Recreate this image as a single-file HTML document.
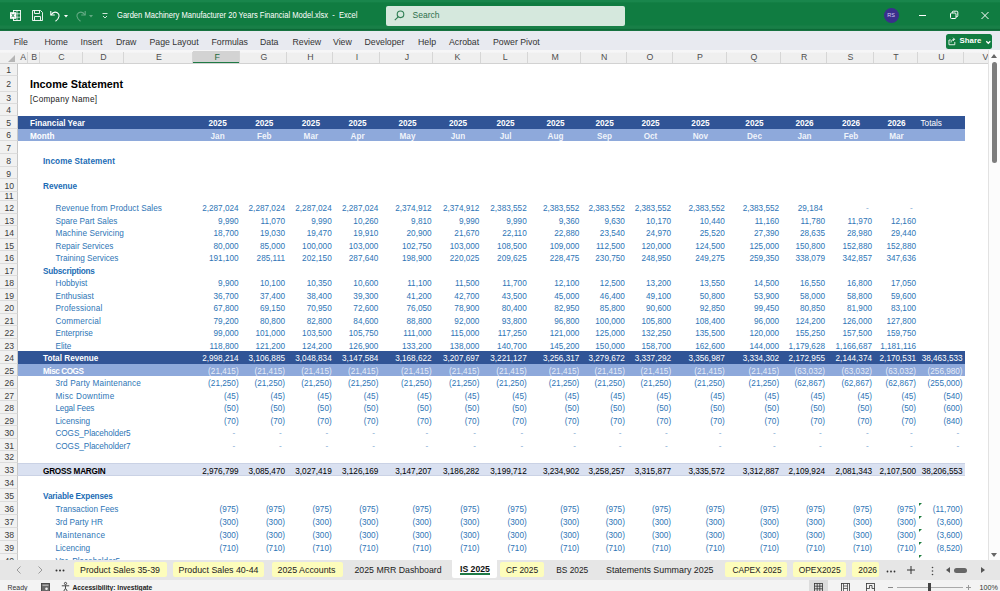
<!DOCTYPE html>
<html><head><meta charset="utf-8"><title>Income Statement - Excel</title>
<style>
*{box-sizing:border-box;margin:0;padding:0}
html,body{width:1000px;height:591px;overflow:hidden;background:#fff}
body{font-family:"Liberation Sans",sans-serif;position:relative}
.t{position:absolute;white-space:nowrap}
#titlebar{position:absolute;left:0;top:0;width:1000px;height:31px;background:linear-gradient(#19864c 0,#19864c 1.5px,#107c41 3px,#107c41 25px,#187f47 26px,#187f47 28.4px,#0c6a37 29.2px,#0c6a37 30.4px,#4a9a6d 31px)}
#menubar{position:absolute;left:0;top:31px;width:1000px;height:18.5px;background:#e8eaf0}
#menubar .t{font-size:9px;color:#333;line-height:12px;top:4.5px}
#colhdr{position:absolute;left:0;top:49.5px;width:988px;height:14.5px;overflow:hidden;background:linear-gradient(#f6f6f7 0,#f6f6f7 2px,#efefef 3.5px);border-bottom:1px solid #d2d2d2}
.ch{position:absolute;top:2.5px;height:11px;padding-left:1.5px;font-size:8.8px;line-height:11.5px;text-align:center;color:#505050;border-right:1px solid #d6d6d6}
.ch.sel{background:#d3d3d3;color:#1d6b3f;box-shadow:0 1px 0 #1f7a45, inset 0 -1px 0 #1f7a45;top:1.5px;height:12px;line-height:13px}
#rowhdr{position:absolute;left:0;top:0;width:18px;height:560px;overflow:hidden}
.rh{position:absolute;left:0;width:18px;background:#f1f1f1;font-size:9.6px;color:#3c3c3c;text-align:center;border-bottom:1px solid #dcdcdc;border-right:1px solid #c8c8c8;padding-left:1px}
.rh span{display:inline-block;transform:scaleX(.9)}
#grid{position:absolute;left:0;top:0;width:988px;height:560px;overflow:hidden}
.band{position:absolute;left:18px;width:946.5px}
#vscroll{position:absolute;left:987.5px;top:49.5px;width:12.5px;height:510.2px;background:#fcfcfc;border-left:1px solid #e2e2e2}
#tabbar{position:absolute;left:0;top:559.7px;width:1000px;height:20.3px;background:#e6e6e6}
#statusbar{position:absolute;left:0;top:580px;width:1000px;height:11px;background:#f3f3f3}
.tab{position:absolute;top:1.9px;height:15.8px;font-size:9.9px;line-height:14.5px;color:#222;white-space:nowrap;text-align:center;border-radius:2px}
.tab.y{background:#fdfdbc}
svg{position:absolute;overflow:visible}
</style></head><body>
<div id="grid">
<div class="band" style="top:116.2px;height:12.7px;background:#305496;"></div>
<div class="band" style="top:128.9px;height:12.3px;background:#8ea9db;"></div>
<div class="band" style="top:351.0px;height:12.5px;background:#305496;"></div>
<div class="band" style="top:363.5px;height:12.5px;background:#8ea9db;"></div>
<div class="band" style="top:463.4px;height:12.6px;background:#dae1f1;box-shadow:inset 0 0.6px 0 #b9c3da, inset 0 -0.6px 0 #b9c3da;"></div>
<div class="t" style="left:30px;top:77.38px;font-size:10.8px;line-height:14.04px;color:#000;font-weight:bold;">Income Statement</div>
<div class="t" style="left:30px;top:95.17px;font-size:8.2px;line-height:10.66px;color:#222;letter-spacing:0.25px;">[Company Name]</div>
<div class="t" style="left:30px;top:119.42px;font-size:8.2px;line-height:10.66px;color:#fff;font-weight:bold;">Financial Year</div>
<div class="t" style="left:30px;top:131.92px;font-size:8.2px;line-height:10.66px;color:#fff;font-weight:bold;">Month</div>
<div class="t" style="left:117.6px;width:200px;text-align:center;top:119.42px;font-size:8.2px;line-height:10.66px;color:#fff;font-weight:bold;">2025</div>
<div class="t" style="left:117.6px;width:200px;text-align:center;top:131.92px;font-size:8.2px;line-height:10.66px;color:rgba(255,255,255,.88);font-weight:bold;">Jan</div>
<div class="t" style="left:164.3px;width:200px;text-align:center;top:119.42px;font-size:8.2px;line-height:10.66px;color:#fff;font-weight:bold;">2025</div>
<div class="t" style="left:164.3px;width:200px;text-align:center;top:131.92px;font-size:8.2px;line-height:10.66px;color:rgba(255,255,255,.88);font-weight:bold;">Feb</div>
<div class="t" style="left:210.85px;width:200px;text-align:center;top:119.42px;font-size:8.2px;line-height:10.66px;color:#fff;font-weight:bold;">2025</div>
<div class="t" style="left:210.85px;width:200px;text-align:center;top:131.92px;font-size:8.2px;line-height:10.66px;color:rgba(255,255,255,.88);font-weight:bold;">Mar</div>
<div class="t" style="left:257.55px;width:200px;text-align:center;top:119.42px;font-size:8.2px;line-height:10.66px;color:#fff;font-weight:bold;">2025</div>
<div class="t" style="left:257.55px;width:200px;text-align:center;top:131.92px;font-size:8.2px;line-height:10.66px;color:rgba(255,255,255,.88);font-weight:bold;">Apr</div>
<div class="t" style="left:307.5px;width:200px;text-align:center;top:119.42px;font-size:8.2px;line-height:10.66px;color:#fff;font-weight:bold;">2025</div>
<div class="t" style="left:307.5px;width:200px;text-align:center;top:131.92px;font-size:8.2px;line-height:10.66px;color:rgba(255,255,255,.88);font-weight:bold;">May</div>
<div class="t" style="left:358px;width:200px;text-align:center;top:119.42px;font-size:8.2px;line-height:10.66px;color:#fff;font-weight:bold;">2025</div>
<div class="t" style="left:358px;width:200px;text-align:center;top:131.92px;font-size:8.2px;line-height:10.66px;color:rgba(255,255,255,.88);font-weight:bold;">Jun</div>
<div class="t" style="left:405.55px;width:200px;text-align:center;top:119.42px;font-size:8.2px;line-height:10.66px;color:#fff;font-weight:bold;">2025</div>
<div class="t" style="left:405.55px;width:200px;text-align:center;top:131.92px;font-size:8.2px;line-height:10.66px;color:rgba(255,255,255,.88);font-weight:bold;">Jul</div>
<div class="t" style="left:455.5px;width:200px;text-align:center;top:119.42px;font-size:8.2px;line-height:10.66px;color:#fff;font-weight:bold;">2025</div>
<div class="t" style="left:455.5px;width:200px;text-align:center;top:131.92px;font-size:8.2px;line-height:10.66px;color:rgba(255,255,255,.88);font-weight:bold;">Aug</div>
<div class="t" style="left:504.6px;width:200px;text-align:center;top:119.42px;font-size:8.2px;line-height:10.66px;color:#fff;font-weight:bold;">2025</div>
<div class="t" style="left:504.6px;width:200px;text-align:center;top:131.92px;font-size:8.2px;line-height:10.66px;color:rgba(255,255,255,.88);font-weight:bold;">Sep</div>
<div class="t" style="left:550.5px;width:200px;text-align:center;top:119.42px;font-size:8.2px;line-height:10.66px;color:#fff;font-weight:bold;">2025</div>
<div class="t" style="left:550.5px;width:200px;text-align:center;top:131.92px;font-size:8.2px;line-height:10.66px;color:rgba(255,255,255,.88);font-weight:bold;">Oct</div>
<div class="t" style="left:600.45px;width:200px;text-align:center;top:119.42px;font-size:8.2px;line-height:10.66px;color:#fff;font-weight:bold;">2025</div>
<div class="t" style="left:600.45px;width:200px;text-align:center;top:131.92px;font-size:8.2px;line-height:10.66px;color:rgba(255,255,255,.88);font-weight:bold;">Nov</div>
<div class="t" style="left:654.45px;width:200px;text-align:center;top:119.42px;font-size:8.2px;line-height:10.66px;color:#fff;font-weight:bold;">2025</div>
<div class="t" style="left:654.45px;width:200px;text-align:center;top:131.92px;font-size:8.2px;line-height:10.66px;color:rgba(255,255,255,.88);font-weight:bold;">Dec</div>
<div class="t" style="left:704.55px;width:200px;text-align:center;top:119.42px;font-size:8.2px;line-height:10.66px;color:#fff;font-weight:bold;">2026</div>
<div class="t" style="left:704.55px;width:200px;text-align:center;top:131.92px;font-size:8.2px;line-height:10.66px;color:rgba(255,255,255,.88);font-weight:bold;">Jan</div>
<div class="t" style="left:751.0px;width:200px;text-align:center;top:119.42px;font-size:8.2px;line-height:10.66px;color:#fff;font-weight:bold;">2026</div>
<div class="t" style="left:751.0px;width:200px;text-align:center;top:131.92px;font-size:8.2px;line-height:10.66px;color:rgba(255,255,255,.88);font-weight:bold;">Feb</div>
<div class="t" style="left:796.5px;width:200px;text-align:center;top:119.42px;font-size:8.2px;line-height:10.66px;color:#fff;font-weight:bold;">2026</div>
<div class="t" style="left:796.5px;width:200px;text-align:center;top:131.92px;font-size:8.2px;line-height:10.66px;color:rgba(255,255,255,.88);font-weight:bold;">Mar</div>
<div class="t" style="left:920.5px;top:119.42px;font-size:8.2px;line-height:10.66px;color:#fff;">Totals</div>
<div class="t" style="left:43px;top:157.12px;font-size:8.2px;line-height:10.66px;color:#1b6cb5;font-weight:bold;letter-spacing:0.09px;">Income Statement</div>
<div class="t" style="left:43px;top:182.12px;font-size:8.2px;line-height:10.66px;color:#1b6cb5;font-weight:bold;">Revenue</div>
<div class="t" style="left:43px;top:266.62px;font-size:8.2px;line-height:10.66px;color:#1b6cb5;font-weight:bold;letter-spacing:-0.23px;">Subscriptions</div>
<div class="t" style="left:43px;top:492.37px;font-size:8.2px;line-height:10.66px;color:#1b6cb5;font-weight:bold;letter-spacing:-0.13px;">Variable Expenses</div>
<div class="t" style="left:55.5px;top:204.12px;font-size:8.2px;line-height:10.66px;color:#2e75b6;letter-spacing:0.07px;">Revenue from Product Sales</div>
<div class="t" style="right:749.4px;top:204.12px;font-size:8.2px;line-height:10.66px;color:#2e75b6;">2,287,024</div>
<div class="t" style="right:703.0px;top:204.12px;font-size:8.2px;line-height:10.66px;color:#2e75b6;">2,287,024</div>
<div class="t" style="right:656.3px;top:204.12px;font-size:8.2px;line-height:10.66px;color:#2e75b6;">2,287,024</div>
<div class="t" style="right:609.6px;top:204.12px;font-size:8.2px;line-height:10.66px;color:#2e75b6;">2,287,024</div>
<div class="t" style="right:556.4px;top:204.12px;font-size:8.2px;line-height:10.66px;color:#2e75b6;">2,374,912</div>
<div class="t" style="right:508.6px;top:204.12px;font-size:8.2px;line-height:10.66px;color:#2e75b6;">2,374,912</div>
<div class="t" style="right:461.3px;top:204.12px;font-size:8.2px;line-height:10.66px;color:#2e75b6;">2,383,552</div>
<div class="t" style="right:408.7px;top:204.12px;font-size:8.2px;line-height:10.66px;color:#2e75b6;">2,383,552</div>
<div class="t" style="right:363.1px;top:204.12px;font-size:8.2px;line-height:10.66px;color:#2e75b6;">2,383,552</div>
<div class="t" style="right:316.9px;top:204.12px;font-size:8.2px;line-height:10.66px;color:#2e75b6;">2,383,552</div>
<div class="t" style="right:263.2px;top:204.12px;font-size:8.2px;line-height:10.66px;color:#2e75b6;">2,383,552</div>
<div class="t" style="right:208.9px;top:204.12px;font-size:8.2px;line-height:10.66px;color:#2e75b6;">2,383,552</div>
<div class="t" style="right:165.2px;top:204.12px;font-size:8.2px;line-height:10.66px;color:#2e75b6;">29,184</div>
<div class="t" style="right:119.4px;top:204.12px;font-size:8.2px;line-height:10.66px;color:#8db0d6;">-</div>
<div class="t" style="right:75.4px;top:204.12px;font-size:8.2px;line-height:10.66px;color:#8db0d6;">-</div>
<div class="t" style="left:55.5px;top:216.62px;font-size:8.2px;line-height:10.66px;color:#2e75b6;">Spare Part Sales</div>
<div class="t" style="right:749.4px;top:216.62px;font-size:8.2px;line-height:10.66px;color:#2e75b6;">9,990</div>
<div class="t" style="right:703.0px;top:216.62px;font-size:8.2px;line-height:10.66px;color:#2e75b6;">11,070</div>
<div class="t" style="right:656.3px;top:216.62px;font-size:8.2px;line-height:10.66px;color:#2e75b6;">9,990</div>
<div class="t" style="right:609.6px;top:216.62px;font-size:8.2px;line-height:10.66px;color:#2e75b6;">10,260</div>
<div class="t" style="right:556.4px;top:216.62px;font-size:8.2px;line-height:10.66px;color:#2e75b6;">9,810</div>
<div class="t" style="right:508.6px;top:216.62px;font-size:8.2px;line-height:10.66px;color:#2e75b6;">9,990</div>
<div class="t" style="right:461.3px;top:216.62px;font-size:8.2px;line-height:10.66px;color:#2e75b6;">9,990</div>
<div class="t" style="right:408.7px;top:216.62px;font-size:8.2px;line-height:10.66px;color:#2e75b6;">9,360</div>
<div class="t" style="right:363.1px;top:216.62px;font-size:8.2px;line-height:10.66px;color:#2e75b6;">9,630</div>
<div class="t" style="right:316.9px;top:216.62px;font-size:8.2px;line-height:10.66px;color:#2e75b6;">10,170</div>
<div class="t" style="right:263.2px;top:216.62px;font-size:8.2px;line-height:10.66px;color:#2e75b6;">10,440</div>
<div class="t" style="right:208.9px;top:216.62px;font-size:8.2px;line-height:10.66px;color:#2e75b6;">11,160</div>
<div class="t" style="right:163.0px;top:216.62px;font-size:8.2px;line-height:10.66px;color:#2e75b6;">11,780</div>
<div class="t" style="right:116.0px;top:216.62px;font-size:8.2px;line-height:10.66px;color:#2e75b6;">11,970</div>
<div class="t" style="right:72.0px;top:216.62px;font-size:8.2px;line-height:10.66px;color:#2e75b6;">12,160</div>
<div class="t" style="left:55.5px;top:229.12px;font-size:8.2px;line-height:10.66px;color:#2e75b6;letter-spacing:0.09px;">Machine Servicing</div>
<div class="t" style="right:749.4px;top:229.12px;font-size:8.2px;line-height:10.66px;color:#2e75b6;">18,700</div>
<div class="t" style="right:703.0px;top:229.12px;font-size:8.2px;line-height:10.66px;color:#2e75b6;">19,030</div>
<div class="t" style="right:656.3px;top:229.12px;font-size:8.2px;line-height:10.66px;color:#2e75b6;">19,470</div>
<div class="t" style="right:609.6px;top:229.12px;font-size:8.2px;line-height:10.66px;color:#2e75b6;">19,910</div>
<div class="t" style="right:556.4px;top:229.12px;font-size:8.2px;line-height:10.66px;color:#2e75b6;">20,900</div>
<div class="t" style="right:508.6px;top:229.12px;font-size:8.2px;line-height:10.66px;color:#2e75b6;">21,670</div>
<div class="t" style="right:461.3px;top:229.12px;font-size:8.2px;line-height:10.66px;color:#2e75b6;">22,110</div>
<div class="t" style="right:408.7px;top:229.12px;font-size:8.2px;line-height:10.66px;color:#2e75b6;">22,880</div>
<div class="t" style="right:363.1px;top:229.12px;font-size:8.2px;line-height:10.66px;color:#2e75b6;">23,540</div>
<div class="t" style="right:316.9px;top:229.12px;font-size:8.2px;line-height:10.66px;color:#2e75b6;">24,970</div>
<div class="t" style="right:263.2px;top:229.12px;font-size:8.2px;line-height:10.66px;color:#2e75b6;">25,520</div>
<div class="t" style="right:208.9px;top:229.12px;font-size:8.2px;line-height:10.66px;color:#2e75b6;">27,390</div>
<div class="t" style="right:163.0px;top:229.12px;font-size:8.2px;line-height:10.66px;color:#2e75b6;">28,635</div>
<div class="t" style="right:116.0px;top:229.12px;font-size:8.2px;line-height:10.66px;color:#2e75b6;">28,980</div>
<div class="t" style="right:72.0px;top:229.12px;font-size:8.2px;line-height:10.66px;color:#2e75b6;">29,440</div>
<div class="t" style="left:55.5px;top:241.62px;font-size:8.2px;line-height:10.66px;color:#2e75b6;">Repair Services</div>
<div class="t" style="right:749.4px;top:241.62px;font-size:8.2px;line-height:10.66px;color:#2e75b6;">80,000</div>
<div class="t" style="right:703.0px;top:241.62px;font-size:8.2px;line-height:10.66px;color:#2e75b6;">85,000</div>
<div class="t" style="right:656.3px;top:241.62px;font-size:8.2px;line-height:10.66px;color:#2e75b6;">100,000</div>
<div class="t" style="right:609.6px;top:241.62px;font-size:8.2px;line-height:10.66px;color:#2e75b6;">103,000</div>
<div class="t" style="right:556.4px;top:241.62px;font-size:8.2px;line-height:10.66px;color:#2e75b6;">102,750</div>
<div class="t" style="right:508.6px;top:241.62px;font-size:8.2px;line-height:10.66px;color:#2e75b6;">103,000</div>
<div class="t" style="right:461.3px;top:241.62px;font-size:8.2px;line-height:10.66px;color:#2e75b6;">108,500</div>
<div class="t" style="right:408.7px;top:241.62px;font-size:8.2px;line-height:10.66px;color:#2e75b6;">109,000</div>
<div class="t" style="right:363.1px;top:241.62px;font-size:8.2px;line-height:10.66px;color:#2e75b6;">112,500</div>
<div class="t" style="right:316.9px;top:241.62px;font-size:8.2px;line-height:10.66px;color:#2e75b6;">120,000</div>
<div class="t" style="right:263.2px;top:241.62px;font-size:8.2px;line-height:10.66px;color:#2e75b6;">124,500</div>
<div class="t" style="right:208.9px;top:241.62px;font-size:8.2px;line-height:10.66px;color:#2e75b6;">125,000</div>
<div class="t" style="right:163.0px;top:241.62px;font-size:8.2px;line-height:10.66px;color:#2e75b6;">150,800</div>
<div class="t" style="right:116.0px;top:241.62px;font-size:8.2px;line-height:10.66px;color:#2e75b6;">152,880</div>
<div class="t" style="right:72.0px;top:241.62px;font-size:8.2px;line-height:10.66px;color:#2e75b6;">152,880</div>
<div class="t" style="left:55.5px;top:254.12px;font-size:8.2px;line-height:10.66px;color:#2e75b6;">Training Services</div>
<div class="t" style="right:749.4px;top:254.12px;font-size:8.2px;line-height:10.66px;color:#2e75b6;">191,100</div>
<div class="t" style="right:703.0px;top:254.12px;font-size:8.2px;line-height:10.66px;color:#2e75b6;">285,111</div>
<div class="t" style="right:656.3px;top:254.12px;font-size:8.2px;line-height:10.66px;color:#2e75b6;">202,150</div>
<div class="t" style="right:609.6px;top:254.12px;font-size:8.2px;line-height:10.66px;color:#2e75b6;">287,640</div>
<div class="t" style="right:556.4px;top:254.12px;font-size:8.2px;line-height:10.66px;color:#2e75b6;">198,900</div>
<div class="t" style="right:508.6px;top:254.12px;font-size:8.2px;line-height:10.66px;color:#2e75b6;">220,025</div>
<div class="t" style="right:461.3px;top:254.12px;font-size:8.2px;line-height:10.66px;color:#2e75b6;">209,625</div>
<div class="t" style="right:408.7px;top:254.12px;font-size:8.2px;line-height:10.66px;color:#2e75b6;">228,475</div>
<div class="t" style="right:363.1px;top:254.12px;font-size:8.2px;line-height:10.66px;color:#2e75b6;">230,750</div>
<div class="t" style="right:316.9px;top:254.12px;font-size:8.2px;line-height:10.66px;color:#2e75b6;">248,950</div>
<div class="t" style="right:263.2px;top:254.12px;font-size:8.2px;line-height:10.66px;color:#2e75b6;">249,275</div>
<div class="t" style="right:208.9px;top:254.12px;font-size:8.2px;line-height:10.66px;color:#2e75b6;">259,350</div>
<div class="t" style="right:163.0px;top:254.12px;font-size:8.2px;line-height:10.66px;color:#2e75b6;">338,079</div>
<div class="t" style="right:116.0px;top:254.12px;font-size:8.2px;line-height:10.66px;color:#2e75b6;">342,857</div>
<div class="t" style="right:72.0px;top:254.12px;font-size:8.2px;line-height:10.66px;color:#2e75b6;">347,636</div>
<div class="t" style="left:55.5px;top:279.12px;font-size:8.2px;line-height:10.66px;color:#2e75b6;">Hobbyist</div>
<div class="t" style="right:749.4px;top:279.12px;font-size:8.2px;line-height:10.66px;color:#2e75b6;">9,900</div>
<div class="t" style="right:703.0px;top:279.12px;font-size:8.2px;line-height:10.66px;color:#2e75b6;">10,100</div>
<div class="t" style="right:656.3px;top:279.12px;font-size:8.2px;line-height:10.66px;color:#2e75b6;">10,350</div>
<div class="t" style="right:609.6px;top:279.12px;font-size:8.2px;line-height:10.66px;color:#2e75b6;">10,600</div>
<div class="t" style="right:556.4px;top:279.12px;font-size:8.2px;line-height:10.66px;color:#2e75b6;">11,100</div>
<div class="t" style="right:508.6px;top:279.12px;font-size:8.2px;line-height:10.66px;color:#2e75b6;">11,500</div>
<div class="t" style="right:461.3px;top:279.12px;font-size:8.2px;line-height:10.66px;color:#2e75b6;">11,700</div>
<div class="t" style="right:408.7px;top:279.12px;font-size:8.2px;line-height:10.66px;color:#2e75b6;">12,100</div>
<div class="t" style="right:363.1px;top:279.12px;font-size:8.2px;line-height:10.66px;color:#2e75b6;">12,500</div>
<div class="t" style="right:316.9px;top:279.12px;font-size:8.2px;line-height:10.66px;color:#2e75b6;">13,200</div>
<div class="t" style="right:263.2px;top:279.12px;font-size:8.2px;line-height:10.66px;color:#2e75b6;">13,550</div>
<div class="t" style="right:208.9px;top:279.12px;font-size:8.2px;line-height:10.66px;color:#2e75b6;">14,500</div>
<div class="t" style="right:163.0px;top:279.12px;font-size:8.2px;line-height:10.66px;color:#2e75b6;">16,550</div>
<div class="t" style="right:116.0px;top:279.12px;font-size:8.2px;line-height:10.66px;color:#2e75b6;">16,800</div>
<div class="t" style="right:72.0px;top:279.12px;font-size:8.2px;line-height:10.66px;color:#2e75b6;">17,050</div>
<div class="t" style="left:55.5px;top:291.62px;font-size:8.2px;line-height:10.66px;color:#2e75b6;">Enthusiast</div>
<div class="t" style="right:749.4px;top:291.62px;font-size:8.2px;line-height:10.66px;color:#2e75b6;">36,700</div>
<div class="t" style="right:703.0px;top:291.62px;font-size:8.2px;line-height:10.66px;color:#2e75b6;">37,400</div>
<div class="t" style="right:656.3px;top:291.62px;font-size:8.2px;line-height:10.66px;color:#2e75b6;">38,400</div>
<div class="t" style="right:609.6px;top:291.62px;font-size:8.2px;line-height:10.66px;color:#2e75b6;">39,300</div>
<div class="t" style="right:556.4px;top:291.62px;font-size:8.2px;line-height:10.66px;color:#2e75b6;">41,200</div>
<div class="t" style="right:508.6px;top:291.62px;font-size:8.2px;line-height:10.66px;color:#2e75b6;">42,700</div>
<div class="t" style="right:461.3px;top:291.62px;font-size:8.2px;line-height:10.66px;color:#2e75b6;">43,500</div>
<div class="t" style="right:408.7px;top:291.62px;font-size:8.2px;line-height:10.66px;color:#2e75b6;">45,000</div>
<div class="t" style="right:363.1px;top:291.62px;font-size:8.2px;line-height:10.66px;color:#2e75b6;">46,400</div>
<div class="t" style="right:316.9px;top:291.62px;font-size:8.2px;line-height:10.66px;color:#2e75b6;">49,100</div>
<div class="t" style="right:263.2px;top:291.62px;font-size:8.2px;line-height:10.66px;color:#2e75b6;">50,800</div>
<div class="t" style="right:208.9px;top:291.62px;font-size:8.2px;line-height:10.66px;color:#2e75b6;">53,900</div>
<div class="t" style="right:163.0px;top:291.62px;font-size:8.2px;line-height:10.66px;color:#2e75b6;">58,000</div>
<div class="t" style="right:116.0px;top:291.62px;font-size:8.2px;line-height:10.66px;color:#2e75b6;">58,800</div>
<div class="t" style="right:72.0px;top:291.62px;font-size:8.2px;line-height:10.66px;color:#2e75b6;">59,600</div>
<div class="t" style="left:55.5px;top:304.12px;font-size:8.2px;line-height:10.66px;color:#2e75b6;letter-spacing:0.15px;">Professional</div>
<div class="t" style="right:749.4px;top:304.12px;font-size:8.2px;line-height:10.66px;color:#2e75b6;">67,800</div>
<div class="t" style="right:703.0px;top:304.12px;font-size:8.2px;line-height:10.66px;color:#2e75b6;">69,150</div>
<div class="t" style="right:656.3px;top:304.12px;font-size:8.2px;line-height:10.66px;color:#2e75b6;">70,950</div>
<div class="t" style="right:609.6px;top:304.12px;font-size:8.2px;line-height:10.66px;color:#2e75b6;">72,600</div>
<div class="t" style="right:556.4px;top:304.12px;font-size:8.2px;line-height:10.66px;color:#2e75b6;">76,050</div>
<div class="t" style="right:508.6px;top:304.12px;font-size:8.2px;line-height:10.66px;color:#2e75b6;">78,900</div>
<div class="t" style="right:461.3px;top:304.12px;font-size:8.2px;line-height:10.66px;color:#2e75b6;">80,400</div>
<div class="t" style="right:408.7px;top:304.12px;font-size:8.2px;line-height:10.66px;color:#2e75b6;">82,950</div>
<div class="t" style="right:363.1px;top:304.12px;font-size:8.2px;line-height:10.66px;color:#2e75b6;">85,800</div>
<div class="t" style="right:316.9px;top:304.12px;font-size:8.2px;line-height:10.66px;color:#2e75b6;">90,600</div>
<div class="t" style="right:263.2px;top:304.12px;font-size:8.2px;line-height:10.66px;color:#2e75b6;">92,850</div>
<div class="t" style="right:208.9px;top:304.12px;font-size:8.2px;line-height:10.66px;color:#2e75b6;">99,450</div>
<div class="t" style="right:163.0px;top:304.12px;font-size:8.2px;line-height:10.66px;color:#2e75b6;">80,850</div>
<div class="t" style="right:116.0px;top:304.12px;font-size:8.2px;line-height:10.66px;color:#2e75b6;">81,900</div>
<div class="t" style="right:72.0px;top:304.12px;font-size:8.2px;line-height:10.66px;color:#2e75b6;">83,100</div>
<div class="t" style="left:55.5px;top:316.62px;font-size:8.2px;line-height:10.66px;color:#2e75b6;letter-spacing:0.18px;">Commercial</div>
<div class="t" style="right:749.4px;top:316.62px;font-size:8.2px;line-height:10.66px;color:#2e75b6;">79,200</div>
<div class="t" style="right:703.0px;top:316.62px;font-size:8.2px;line-height:10.66px;color:#2e75b6;">80,800</div>
<div class="t" style="right:656.3px;top:316.62px;font-size:8.2px;line-height:10.66px;color:#2e75b6;">82,800</div>
<div class="t" style="right:609.6px;top:316.62px;font-size:8.2px;line-height:10.66px;color:#2e75b6;">84,600</div>
<div class="t" style="right:556.4px;top:316.62px;font-size:8.2px;line-height:10.66px;color:#2e75b6;">88,800</div>
<div class="t" style="right:508.6px;top:316.62px;font-size:8.2px;line-height:10.66px;color:#2e75b6;">92,000</div>
<div class="t" style="right:461.3px;top:316.62px;font-size:8.2px;line-height:10.66px;color:#2e75b6;">93,800</div>
<div class="t" style="right:408.7px;top:316.62px;font-size:8.2px;line-height:10.66px;color:#2e75b6;">96,800</div>
<div class="t" style="right:363.1px;top:316.62px;font-size:8.2px;line-height:10.66px;color:#2e75b6;">100,000</div>
<div class="t" style="right:316.9px;top:316.62px;font-size:8.2px;line-height:10.66px;color:#2e75b6;">105,800</div>
<div class="t" style="right:263.2px;top:316.62px;font-size:8.2px;line-height:10.66px;color:#2e75b6;">108,400</div>
<div class="t" style="right:208.9px;top:316.62px;font-size:8.2px;line-height:10.66px;color:#2e75b6;">96,000</div>
<div class="t" style="right:163.0px;top:316.62px;font-size:8.2px;line-height:10.66px;color:#2e75b6;">124,200</div>
<div class="t" style="right:116.0px;top:316.62px;font-size:8.2px;line-height:10.66px;color:#2e75b6;">126,000</div>
<div class="t" style="right:72.0px;top:316.62px;font-size:8.2px;line-height:10.66px;color:#2e75b6;">127,800</div>
<div class="t" style="left:55.5px;top:329.12px;font-size:8.2px;line-height:10.66px;color:#2e75b6;">Enterprise</div>
<div class="t" style="right:749.4px;top:329.12px;font-size:8.2px;line-height:10.66px;color:#2e75b6;">99,000</div>
<div class="t" style="right:703.0px;top:329.12px;font-size:8.2px;line-height:10.66px;color:#2e75b6;">101,000</div>
<div class="t" style="right:656.3px;top:329.12px;font-size:8.2px;line-height:10.66px;color:#2e75b6;">103,500</div>
<div class="t" style="right:609.6px;top:329.12px;font-size:8.2px;line-height:10.66px;color:#2e75b6;">105,750</div>
<div class="t" style="right:556.4px;top:329.12px;font-size:8.2px;line-height:10.66px;color:#2e75b6;">111,000</div>
<div class="t" style="right:508.6px;top:329.12px;font-size:8.2px;line-height:10.66px;color:#2e75b6;">115,000</div>
<div class="t" style="right:461.3px;top:329.12px;font-size:8.2px;line-height:10.66px;color:#2e75b6;">117,250</div>
<div class="t" style="right:408.7px;top:329.12px;font-size:8.2px;line-height:10.66px;color:#2e75b6;">121,000</div>
<div class="t" style="right:363.1px;top:329.12px;font-size:8.2px;line-height:10.66px;color:#2e75b6;">125,000</div>
<div class="t" style="right:316.9px;top:329.12px;font-size:8.2px;line-height:10.66px;color:#2e75b6;">132,250</div>
<div class="t" style="right:263.2px;top:329.12px;font-size:8.2px;line-height:10.66px;color:#2e75b6;">135,500</div>
<div class="t" style="right:208.9px;top:329.12px;font-size:8.2px;line-height:10.66px;color:#2e75b6;">120,000</div>
<div class="t" style="right:163.0px;top:329.12px;font-size:8.2px;line-height:10.66px;color:#2e75b6;">155,250</div>
<div class="t" style="right:116.0px;top:329.12px;font-size:8.2px;line-height:10.66px;color:#2e75b6;">157,500</div>
<div class="t" style="right:72.0px;top:329.12px;font-size:8.2px;line-height:10.66px;color:#2e75b6;">159,750</div>
<div class="t" style="left:55.5px;top:341.62px;font-size:8.2px;line-height:10.66px;color:#2e75b6;">Elite</div>
<div class="t" style="right:749.4px;top:341.62px;font-size:8.2px;line-height:10.66px;color:#2e75b6;">118,800</div>
<div class="t" style="right:703.0px;top:341.62px;font-size:8.2px;line-height:10.66px;color:#2e75b6;">121,200</div>
<div class="t" style="right:656.3px;top:341.62px;font-size:8.2px;line-height:10.66px;color:#2e75b6;">124,200</div>
<div class="t" style="right:609.6px;top:341.62px;font-size:8.2px;line-height:10.66px;color:#2e75b6;">126,900</div>
<div class="t" style="right:556.4px;top:341.62px;font-size:8.2px;line-height:10.66px;color:#2e75b6;">133,200</div>
<div class="t" style="right:508.6px;top:341.62px;font-size:8.2px;line-height:10.66px;color:#2e75b6;">138,000</div>
<div class="t" style="right:461.3px;top:341.62px;font-size:8.2px;line-height:10.66px;color:#2e75b6;">140,700</div>
<div class="t" style="right:408.7px;top:341.62px;font-size:8.2px;line-height:10.66px;color:#2e75b6;">145,200</div>
<div class="t" style="right:363.1px;top:341.62px;font-size:8.2px;line-height:10.66px;color:#2e75b6;">150,000</div>
<div class="t" style="right:316.9px;top:341.62px;font-size:8.2px;line-height:10.66px;color:#2e75b6;">158,700</div>
<div class="t" style="right:263.2px;top:341.62px;font-size:8.2px;line-height:10.66px;color:#2e75b6;">162,600</div>
<div class="t" style="right:208.9px;top:341.62px;font-size:8.2px;line-height:10.66px;color:#2e75b6;">144,000</div>
<div class="t" style="right:163.0px;top:341.62px;font-size:8.2px;line-height:10.66px;color:#2e75b6;">1,179,628</div>
<div class="t" style="right:116.0px;top:341.62px;font-size:8.2px;line-height:10.66px;color:#2e75b6;">1,166,687</div>
<div class="t" style="right:72.0px;top:341.62px;font-size:8.2px;line-height:10.66px;color:#2e75b6;">1,181,116</div>
<div class="t" style="left:43px;top:354.12px;font-size:8.2px;line-height:10.66px;color:#fff;font-weight:bold;">Total Revenue</div>
<div class="t" style="right:749.4px;top:354.12px;font-size:8.2px;line-height:10.66px;color:#fff;">2,998,214</div>
<div class="t" style="right:703.0px;top:354.12px;font-size:8.2px;line-height:10.66px;color:#fff;">3,106,885</div>
<div class="t" style="right:656.3px;top:354.12px;font-size:8.2px;line-height:10.66px;color:#fff;">3,048,834</div>
<div class="t" style="right:609.6px;top:354.12px;font-size:8.2px;line-height:10.66px;color:#fff;">3,147,584</div>
<div class="t" style="right:556.4px;top:354.12px;font-size:8.2px;line-height:10.66px;color:#fff;">3,168,622</div>
<div class="t" style="right:508.6px;top:354.12px;font-size:8.2px;line-height:10.66px;color:#fff;">3,207,697</div>
<div class="t" style="right:461.3px;top:354.12px;font-size:8.2px;line-height:10.66px;color:#fff;">3,221,127</div>
<div class="t" style="right:408.7px;top:354.12px;font-size:8.2px;line-height:10.66px;color:#fff;">3,256,317</div>
<div class="t" style="right:363.1px;top:354.12px;font-size:8.2px;line-height:10.66px;color:#fff;">3,279,672</div>
<div class="t" style="right:316.9px;top:354.12px;font-size:8.2px;line-height:10.66px;color:#fff;">3,337,292</div>
<div class="t" style="right:263.2px;top:354.12px;font-size:8.2px;line-height:10.66px;color:#fff;">3,356,987</div>
<div class="t" style="right:208.9px;top:354.12px;font-size:8.2px;line-height:10.66px;color:#fff;">3,334,302</div>
<div class="t" style="right:163.0px;top:354.12px;font-size:8.2px;line-height:10.66px;color:#fff;">2,172,955</div>
<div class="t" style="right:116.0px;top:354.12px;font-size:8.2px;line-height:10.66px;color:#fff;">2,144,374</div>
<div class="t" style="right:72.0px;top:354.12px;font-size:8.2px;line-height:10.66px;color:#fff;">2,170,531</div>
<div class="t" style="right:25.4px;top:354.12px;font-size:8.2px;line-height:10.66px;color:#fff;">38,463,533</div>
<div class="t" style="left:43px;top:366.62px;font-size:8.2px;line-height:10.66px;color:#fff;font-weight:bold;letter-spacing:-0.45px;">Misc COGS</div>
<div class="t" style="right:749.4px;top:366.62px;font-size:8.2px;line-height:10.66px;color:rgba(255,255,255,.8);">(21,415)</div>
<div class="t" style="right:703.0px;top:366.62px;font-size:8.2px;line-height:10.66px;color:rgba(255,255,255,.8);">(21,415)</div>
<div class="t" style="right:656.3px;top:366.62px;font-size:8.2px;line-height:10.66px;color:rgba(255,255,255,.8);">(21,415)</div>
<div class="t" style="right:609.6px;top:366.62px;font-size:8.2px;line-height:10.66px;color:rgba(255,255,255,.8);">(21,415)</div>
<div class="t" style="right:556.4px;top:366.62px;font-size:8.2px;line-height:10.66px;color:rgba(255,255,255,.8);">(21,415)</div>
<div class="t" style="right:508.6px;top:366.62px;font-size:8.2px;line-height:10.66px;color:rgba(255,255,255,.8);">(21,415)</div>
<div class="t" style="right:461.3px;top:366.62px;font-size:8.2px;line-height:10.66px;color:rgba(255,255,255,.8);">(21,415)</div>
<div class="t" style="right:408.7px;top:366.62px;font-size:8.2px;line-height:10.66px;color:rgba(255,255,255,.8);">(21,415)</div>
<div class="t" style="right:363.1px;top:366.62px;font-size:8.2px;line-height:10.66px;color:rgba(255,255,255,.8);">(21,415)</div>
<div class="t" style="right:316.9px;top:366.62px;font-size:8.2px;line-height:10.66px;color:rgba(255,255,255,.8);">(21,415)</div>
<div class="t" style="right:263.2px;top:366.62px;font-size:8.2px;line-height:10.66px;color:rgba(255,255,255,.8);">(21,415)</div>
<div class="t" style="right:208.9px;top:366.62px;font-size:8.2px;line-height:10.66px;color:rgba(255,255,255,.8);">(21,415)</div>
<div class="t" style="right:163.0px;top:366.62px;font-size:8.2px;line-height:10.66px;color:rgba(255,255,255,.8);">(63,032)</div>
<div class="t" style="right:116.0px;top:366.62px;font-size:8.2px;line-height:10.66px;color:rgba(255,255,255,.8);">(63,032)</div>
<div class="t" style="right:72.0px;top:366.62px;font-size:8.2px;line-height:10.66px;color:rgba(255,255,255,.8);">(63,032)</div>
<div class="t" style="right:25.4px;top:366.62px;font-size:8.2px;line-height:10.66px;color:rgba(255,255,255,.8);">(256,980)</div>
<div class="t" style="left:55.5px;top:379.12px;font-size:8.2px;line-height:10.66px;color:#2e75b6;letter-spacing:0.15px;">3rd Party Maintenance</div>
<div class="t" style="right:749.4px;top:379.12px;font-size:8.2px;line-height:10.66px;color:#2e75b6;">(21,250)</div>
<div class="t" style="right:703.0px;top:379.12px;font-size:8.2px;line-height:10.66px;color:#2e75b6;">(21,250)</div>
<div class="t" style="right:656.3px;top:379.12px;font-size:8.2px;line-height:10.66px;color:#2e75b6;">(21,250)</div>
<div class="t" style="right:609.6px;top:379.12px;font-size:8.2px;line-height:10.66px;color:#2e75b6;">(21,250)</div>
<div class="t" style="right:556.4px;top:379.12px;font-size:8.2px;line-height:10.66px;color:#2e75b6;">(21,250)</div>
<div class="t" style="right:508.6px;top:379.12px;font-size:8.2px;line-height:10.66px;color:#2e75b6;">(21,250)</div>
<div class="t" style="right:461.3px;top:379.12px;font-size:8.2px;line-height:10.66px;color:#2e75b6;">(21,250)</div>
<div class="t" style="right:408.7px;top:379.12px;font-size:8.2px;line-height:10.66px;color:#2e75b6;">(21,250)</div>
<div class="t" style="right:363.1px;top:379.12px;font-size:8.2px;line-height:10.66px;color:#2e75b6;">(21,250)</div>
<div class="t" style="right:316.9px;top:379.12px;font-size:8.2px;line-height:10.66px;color:#2e75b6;">(21,250)</div>
<div class="t" style="right:263.2px;top:379.12px;font-size:8.2px;line-height:10.66px;color:#2e75b6;">(21,250)</div>
<div class="t" style="right:208.9px;top:379.12px;font-size:8.2px;line-height:10.66px;color:#2e75b6;">(21,250)</div>
<div class="t" style="right:163.0px;top:379.12px;font-size:8.2px;line-height:10.66px;color:#2e75b6;">(62,867)</div>
<div class="t" style="right:116.0px;top:379.12px;font-size:8.2px;line-height:10.66px;color:#2e75b6;">(62,867)</div>
<div class="t" style="right:72.0px;top:379.12px;font-size:8.2px;line-height:10.66px;color:#2e75b6;">(62,867)</div>
<div class="t" style="right:25.4px;top:379.12px;font-size:8.2px;line-height:10.66px;color:#2e75b6;">(255,000)</div>
<div class="t" style="left:55.5px;top:391.62px;font-size:8.2px;line-height:10.66px;color:#2e75b6;letter-spacing:0.27px;">Misc Downtime</div>
<div class="t" style="right:749.4px;top:391.62px;font-size:8.2px;line-height:10.66px;color:#2e75b6;">(45)</div>
<div class="t" style="right:703.0px;top:391.62px;font-size:8.2px;line-height:10.66px;color:#2e75b6;">(45)</div>
<div class="t" style="right:656.3px;top:391.62px;font-size:8.2px;line-height:10.66px;color:#2e75b6;">(45)</div>
<div class="t" style="right:609.6px;top:391.62px;font-size:8.2px;line-height:10.66px;color:#2e75b6;">(45)</div>
<div class="t" style="right:556.4px;top:391.62px;font-size:8.2px;line-height:10.66px;color:#2e75b6;">(45)</div>
<div class="t" style="right:508.6px;top:391.62px;font-size:8.2px;line-height:10.66px;color:#2e75b6;">(45)</div>
<div class="t" style="right:461.3px;top:391.62px;font-size:8.2px;line-height:10.66px;color:#2e75b6;">(45)</div>
<div class="t" style="right:408.7px;top:391.62px;font-size:8.2px;line-height:10.66px;color:#2e75b6;">(45)</div>
<div class="t" style="right:363.1px;top:391.62px;font-size:8.2px;line-height:10.66px;color:#2e75b6;">(45)</div>
<div class="t" style="right:316.9px;top:391.62px;font-size:8.2px;line-height:10.66px;color:#2e75b6;">(45)</div>
<div class="t" style="right:263.2px;top:391.62px;font-size:8.2px;line-height:10.66px;color:#2e75b6;">(45)</div>
<div class="t" style="right:208.9px;top:391.62px;font-size:8.2px;line-height:10.66px;color:#2e75b6;">(45)</div>
<div class="t" style="right:163.0px;top:391.62px;font-size:8.2px;line-height:10.66px;color:#2e75b6;">(45)</div>
<div class="t" style="right:116.0px;top:391.62px;font-size:8.2px;line-height:10.66px;color:#2e75b6;">(45)</div>
<div class="t" style="right:72.0px;top:391.62px;font-size:8.2px;line-height:10.66px;color:#2e75b6;">(45)</div>
<div class="t" style="right:25.4px;top:391.62px;font-size:8.2px;line-height:10.66px;color:#2e75b6;">(540)</div>
<div class="t" style="left:55.5px;top:404.12px;font-size:8.2px;line-height:10.66px;color:#2e75b6;letter-spacing:-0.18px;">Legal Fees</div>
<div class="t" style="right:749.4px;top:404.12px;font-size:8.2px;line-height:10.66px;color:#2e75b6;">(50)</div>
<div class="t" style="right:703.0px;top:404.12px;font-size:8.2px;line-height:10.66px;color:#2e75b6;">(50)</div>
<div class="t" style="right:656.3px;top:404.12px;font-size:8.2px;line-height:10.66px;color:#2e75b6;">(50)</div>
<div class="t" style="right:609.6px;top:404.12px;font-size:8.2px;line-height:10.66px;color:#2e75b6;">(50)</div>
<div class="t" style="right:556.4px;top:404.12px;font-size:8.2px;line-height:10.66px;color:#2e75b6;">(50)</div>
<div class="t" style="right:508.6px;top:404.12px;font-size:8.2px;line-height:10.66px;color:#2e75b6;">(50)</div>
<div class="t" style="right:461.3px;top:404.12px;font-size:8.2px;line-height:10.66px;color:#2e75b6;">(50)</div>
<div class="t" style="right:408.7px;top:404.12px;font-size:8.2px;line-height:10.66px;color:#2e75b6;">(50)</div>
<div class="t" style="right:363.1px;top:404.12px;font-size:8.2px;line-height:10.66px;color:#2e75b6;">(50)</div>
<div class="t" style="right:316.9px;top:404.12px;font-size:8.2px;line-height:10.66px;color:#2e75b6;">(50)</div>
<div class="t" style="right:263.2px;top:404.12px;font-size:8.2px;line-height:10.66px;color:#2e75b6;">(50)</div>
<div class="t" style="right:208.9px;top:404.12px;font-size:8.2px;line-height:10.66px;color:#2e75b6;">(50)</div>
<div class="t" style="right:163.0px;top:404.12px;font-size:8.2px;line-height:10.66px;color:#2e75b6;">(50)</div>
<div class="t" style="right:116.0px;top:404.12px;font-size:8.2px;line-height:10.66px;color:#2e75b6;">(50)</div>
<div class="t" style="right:72.0px;top:404.12px;font-size:8.2px;line-height:10.66px;color:#2e75b6;">(50)</div>
<div class="t" style="right:25.4px;top:404.12px;font-size:8.2px;line-height:10.66px;color:#2e75b6;">(600)</div>
<div class="t" style="left:55.5px;top:416.62px;font-size:8.2px;line-height:10.66px;color:#2e75b6;">Licensing</div>
<div class="t" style="right:749.4px;top:416.62px;font-size:8.2px;line-height:10.66px;color:#2e75b6;">(70)</div>
<div class="t" style="right:703.0px;top:416.62px;font-size:8.2px;line-height:10.66px;color:#2e75b6;">(70)</div>
<div class="t" style="right:656.3px;top:416.62px;font-size:8.2px;line-height:10.66px;color:#2e75b6;">(70)</div>
<div class="t" style="right:609.6px;top:416.62px;font-size:8.2px;line-height:10.66px;color:#2e75b6;">(70)</div>
<div class="t" style="right:556.4px;top:416.62px;font-size:8.2px;line-height:10.66px;color:#2e75b6;">(70)</div>
<div class="t" style="right:508.6px;top:416.62px;font-size:8.2px;line-height:10.66px;color:#2e75b6;">(70)</div>
<div class="t" style="right:461.3px;top:416.62px;font-size:8.2px;line-height:10.66px;color:#2e75b6;">(70)</div>
<div class="t" style="right:408.7px;top:416.62px;font-size:8.2px;line-height:10.66px;color:#2e75b6;">(70)</div>
<div class="t" style="right:363.1px;top:416.62px;font-size:8.2px;line-height:10.66px;color:#2e75b6;">(70)</div>
<div class="t" style="right:316.9px;top:416.62px;font-size:8.2px;line-height:10.66px;color:#2e75b6;">(70)</div>
<div class="t" style="right:263.2px;top:416.62px;font-size:8.2px;line-height:10.66px;color:#2e75b6;">(70)</div>
<div class="t" style="right:208.9px;top:416.62px;font-size:8.2px;line-height:10.66px;color:#2e75b6;">(70)</div>
<div class="t" style="right:163.0px;top:416.62px;font-size:8.2px;line-height:10.66px;color:#2e75b6;">(70)</div>
<div class="t" style="right:116.0px;top:416.62px;font-size:8.2px;line-height:10.66px;color:#2e75b6;">(70)</div>
<div class="t" style="right:72.0px;top:416.62px;font-size:8.2px;line-height:10.66px;color:#2e75b6;">(70)</div>
<div class="t" style="right:25.4px;top:416.62px;font-size:8.2px;line-height:10.66px;color:#2e75b6;">(840)</div>
<div class="t" style="left:55.5px;top:429.12px;font-size:8.2px;line-height:10.66px;color:#2e75b6;letter-spacing:-0.08px;">COGS_Placeholder5</div>
<div class="t" style="right:752.8px;top:429.12px;font-size:8.2px;line-height:10.66px;color:#8db0d6;">-</div>
<div class="t" style="right:706.4px;top:429.12px;font-size:8.2px;line-height:10.66px;color:#8db0d6;">-</div>
<div class="t" style="right:659.7px;top:429.12px;font-size:8.2px;line-height:10.66px;color:#8db0d6;">-</div>
<div class="t" style="right:613.0px;top:429.12px;font-size:8.2px;line-height:10.66px;color:#8db0d6;">-</div>
<div class="t" style="right:559.8px;top:429.12px;font-size:8.2px;line-height:10.66px;color:#8db0d6;">-</div>
<div class="t" style="right:512.0px;top:429.12px;font-size:8.2px;line-height:10.66px;color:#8db0d6;">-</div>
<div class="t" style="right:464.7px;top:429.12px;font-size:8.2px;line-height:10.66px;color:#8db0d6;">-</div>
<div class="t" style="right:412.1px;top:429.12px;font-size:8.2px;line-height:10.66px;color:#8db0d6;">-</div>
<div class="t" style="right:366.5px;top:429.12px;font-size:8.2px;line-height:10.66px;color:#8db0d6;">-</div>
<div class="t" style="right:320.3px;top:429.12px;font-size:8.2px;line-height:10.66px;color:#8db0d6;">-</div>
<div class="t" style="right:266.6px;top:429.12px;font-size:8.2px;line-height:10.66px;color:#8db0d6;">-</div>
<div class="t" style="right:212.3px;top:429.12px;font-size:8.2px;line-height:10.66px;color:#8db0d6;">-</div>
<div class="t" style="right:166.4px;top:429.12px;font-size:8.2px;line-height:10.66px;color:#8db0d6;">-</div>
<div class="t" style="right:119.4px;top:429.12px;font-size:8.2px;line-height:10.66px;color:#8db0d6;">-</div>
<div class="t" style="right:75.4px;top:429.12px;font-size:8.2px;line-height:10.66px;color:#8db0d6;">-</div>
<div class="t" style="right:28.8px;top:429.12px;font-size:8.2px;line-height:10.66px;color:#8db0d6;">-</div>
<div class="t" style="left:55.5px;top:441.62px;font-size:8.2px;line-height:10.66px;color:#2e75b6;letter-spacing:-0.08px;">COGS_Placeholder7</div>
<div class="t" style="right:752.8px;top:441.62px;font-size:8.2px;line-height:10.66px;color:#8db0d6;">-</div>
<div class="t" style="right:706.4px;top:441.62px;font-size:8.2px;line-height:10.66px;color:#8db0d6;">-</div>
<div class="t" style="right:659.7px;top:441.62px;font-size:8.2px;line-height:10.66px;color:#8db0d6;">-</div>
<div class="t" style="right:613.0px;top:441.62px;font-size:8.2px;line-height:10.66px;color:#8db0d6;">-</div>
<div class="t" style="right:559.8px;top:441.62px;font-size:8.2px;line-height:10.66px;color:#8db0d6;">-</div>
<div class="t" style="right:512.0px;top:441.62px;font-size:8.2px;line-height:10.66px;color:#8db0d6;">-</div>
<div class="t" style="right:464.7px;top:441.62px;font-size:8.2px;line-height:10.66px;color:#8db0d6;">-</div>
<div class="t" style="right:412.1px;top:441.62px;font-size:8.2px;line-height:10.66px;color:#8db0d6;">-</div>
<div class="t" style="right:366.5px;top:441.62px;font-size:8.2px;line-height:10.66px;color:#8db0d6;">-</div>
<div class="t" style="right:320.3px;top:441.62px;font-size:8.2px;line-height:10.66px;color:#8db0d6;">-</div>
<div class="t" style="right:266.6px;top:441.62px;font-size:8.2px;line-height:10.66px;color:#8db0d6;">-</div>
<div class="t" style="right:212.3px;top:441.62px;font-size:8.2px;line-height:10.66px;color:#8db0d6;">-</div>
<div class="t" style="right:166.4px;top:441.62px;font-size:8.2px;line-height:10.66px;color:#8db0d6;">-</div>
<div class="t" style="right:119.4px;top:441.62px;font-size:8.2px;line-height:10.66px;color:#8db0d6;">-</div>
<div class="t" style="right:75.4px;top:441.62px;font-size:8.2px;line-height:10.66px;color:#8db0d6;">-</div>
<div class="t" style="right:28.8px;top:441.62px;font-size:8.2px;line-height:10.66px;color:#8db0d6;">-</div>
<div class="t" style="left:43px;top:466.57px;font-size:8.2px;line-height:10.66px;color:#000;font-weight:bold;letter-spacing:-0.22px;">GROSS MARGIN</div>
<div class="t" style="right:749.4px;top:466.57px;font-size:8.2px;line-height:10.66px;color:#000;">2,976,799</div>
<div class="t" style="right:703.0px;top:466.57px;font-size:8.2px;line-height:10.66px;color:#000;">3,085,470</div>
<div class="t" style="right:656.3px;top:466.57px;font-size:8.2px;line-height:10.66px;color:#000;">3,027,419</div>
<div class="t" style="right:609.6px;top:466.57px;font-size:8.2px;line-height:10.66px;color:#000;">3,126,169</div>
<div class="t" style="right:556.4px;top:466.57px;font-size:8.2px;line-height:10.66px;color:#000;">3,147,207</div>
<div class="t" style="right:508.6px;top:466.57px;font-size:8.2px;line-height:10.66px;color:#000;">3,186,282</div>
<div class="t" style="right:461.3px;top:466.57px;font-size:8.2px;line-height:10.66px;color:#000;">3,199,712</div>
<div class="t" style="right:408.7px;top:466.57px;font-size:8.2px;line-height:10.66px;color:#000;">3,234,902</div>
<div class="t" style="right:363.1px;top:466.57px;font-size:8.2px;line-height:10.66px;color:#000;">3,258,257</div>
<div class="t" style="right:316.9px;top:466.57px;font-size:8.2px;line-height:10.66px;color:#000;">3,315,877</div>
<div class="t" style="right:263.2px;top:466.57px;font-size:8.2px;line-height:10.66px;color:#000;">3,335,572</div>
<div class="t" style="right:208.9px;top:466.57px;font-size:8.2px;line-height:10.66px;color:#000;">3,312,887</div>
<div class="t" style="right:163.0px;top:466.57px;font-size:8.2px;line-height:10.66px;color:#000;">2,109,924</div>
<div class="t" style="right:116.0px;top:466.57px;font-size:8.2px;line-height:10.66px;color:#000;">2,081,343</div>
<div class="t" style="right:72.0px;top:466.57px;font-size:8.2px;line-height:10.66px;color:#000;">2,107,500</div>
<div class="t" style="right:25.4px;top:466.57px;font-size:8.2px;line-height:10.66px;color:#000;">38,206,553</div>
<div class="t" style="left:55.5px;top:505.37px;font-size:8.2px;line-height:10.66px;color:#2e75b6;">Transaction Fees</div>
<div class="t" style="right:749.4px;top:505.37px;font-size:8.2px;line-height:10.66px;color:#2e75b6;">(975)</div>
<div class="t" style="right:703.0px;top:505.37px;font-size:8.2px;line-height:10.66px;color:#2e75b6;">(975)</div>
<div class="t" style="right:656.3px;top:505.37px;font-size:8.2px;line-height:10.66px;color:#2e75b6;">(975)</div>
<div class="t" style="right:609.6px;top:505.37px;font-size:8.2px;line-height:10.66px;color:#2e75b6;">(975)</div>
<div class="t" style="right:556.4px;top:505.37px;font-size:8.2px;line-height:10.66px;color:#2e75b6;">(975)</div>
<div class="t" style="right:508.6px;top:505.37px;font-size:8.2px;line-height:10.66px;color:#2e75b6;">(975)</div>
<div class="t" style="right:461.3px;top:505.37px;font-size:8.2px;line-height:10.66px;color:#2e75b6;">(975)</div>
<div class="t" style="right:408.7px;top:505.37px;font-size:8.2px;line-height:10.66px;color:#2e75b6;">(975)</div>
<div class="t" style="right:363.1px;top:505.37px;font-size:8.2px;line-height:10.66px;color:#2e75b6;">(975)</div>
<div class="t" style="right:316.9px;top:505.37px;font-size:8.2px;line-height:10.66px;color:#2e75b6;">(975)</div>
<div class="t" style="right:263.2px;top:505.37px;font-size:8.2px;line-height:10.66px;color:#2e75b6;">(975)</div>
<div class="t" style="right:208.9px;top:505.37px;font-size:8.2px;line-height:10.66px;color:#2e75b6;">(975)</div>
<div class="t" style="right:163.0px;top:505.37px;font-size:8.2px;line-height:10.66px;color:#2e75b6;">(975)</div>
<div class="t" style="right:116.0px;top:505.37px;font-size:8.2px;line-height:10.66px;color:#2e75b6;">(975)</div>
<div class="t" style="right:72.0px;top:505.37px;font-size:8.2px;line-height:10.66px;color:#2e75b6;">(975)</div>
<div class="t" style="right:25.4px;top:505.37px;font-size:8.2px;line-height:10.66px;color:#2e75b6;">(11,700)</div>
<div class="t" style="left:55.5px;top:518.37px;font-size:8.2px;line-height:10.66px;color:#2e75b6;">3rd Party HR</div>
<div class="t" style="right:749.4px;top:518.37px;font-size:8.2px;line-height:10.66px;color:#2e75b6;">(300)</div>
<div class="t" style="right:703.0px;top:518.37px;font-size:8.2px;line-height:10.66px;color:#2e75b6;">(300)</div>
<div class="t" style="right:656.3px;top:518.37px;font-size:8.2px;line-height:10.66px;color:#2e75b6;">(300)</div>
<div class="t" style="right:609.6px;top:518.37px;font-size:8.2px;line-height:10.66px;color:#2e75b6;">(300)</div>
<div class="t" style="right:556.4px;top:518.37px;font-size:8.2px;line-height:10.66px;color:#2e75b6;">(300)</div>
<div class="t" style="right:508.6px;top:518.37px;font-size:8.2px;line-height:10.66px;color:#2e75b6;">(300)</div>
<div class="t" style="right:461.3px;top:518.37px;font-size:8.2px;line-height:10.66px;color:#2e75b6;">(300)</div>
<div class="t" style="right:408.7px;top:518.37px;font-size:8.2px;line-height:10.66px;color:#2e75b6;">(300)</div>
<div class="t" style="right:363.1px;top:518.37px;font-size:8.2px;line-height:10.66px;color:#2e75b6;">(300)</div>
<div class="t" style="right:316.9px;top:518.37px;font-size:8.2px;line-height:10.66px;color:#2e75b6;">(300)</div>
<div class="t" style="right:263.2px;top:518.37px;font-size:8.2px;line-height:10.66px;color:#2e75b6;">(300)</div>
<div class="t" style="right:208.9px;top:518.37px;font-size:8.2px;line-height:10.66px;color:#2e75b6;">(300)</div>
<div class="t" style="right:163.0px;top:518.37px;font-size:8.2px;line-height:10.66px;color:#2e75b6;">(300)</div>
<div class="t" style="right:116.0px;top:518.37px;font-size:8.2px;line-height:10.66px;color:#2e75b6;">(300)</div>
<div class="t" style="right:72.0px;top:518.37px;font-size:8.2px;line-height:10.66px;color:#2e75b6;">(300)</div>
<div class="t" style="right:25.4px;top:518.37px;font-size:8.2px;line-height:10.66px;color:#2e75b6;">(3,600)</div>
<div class="t" style="left:55.5px;top:531.37px;font-size:8.2px;line-height:10.66px;color:#2e75b6;letter-spacing:0.27px;">Maintenance</div>
<div class="t" style="right:749.4px;top:531.37px;font-size:8.2px;line-height:10.66px;color:#2e75b6;">(300)</div>
<div class="t" style="right:703.0px;top:531.37px;font-size:8.2px;line-height:10.66px;color:#2e75b6;">(300)</div>
<div class="t" style="right:656.3px;top:531.37px;font-size:8.2px;line-height:10.66px;color:#2e75b6;">(300)</div>
<div class="t" style="right:609.6px;top:531.37px;font-size:8.2px;line-height:10.66px;color:#2e75b6;">(300)</div>
<div class="t" style="right:556.4px;top:531.37px;font-size:8.2px;line-height:10.66px;color:#2e75b6;">(300)</div>
<div class="t" style="right:508.6px;top:531.37px;font-size:8.2px;line-height:10.66px;color:#2e75b6;">(300)</div>
<div class="t" style="right:461.3px;top:531.37px;font-size:8.2px;line-height:10.66px;color:#2e75b6;">(300)</div>
<div class="t" style="right:408.7px;top:531.37px;font-size:8.2px;line-height:10.66px;color:#2e75b6;">(300)</div>
<div class="t" style="right:363.1px;top:531.37px;font-size:8.2px;line-height:10.66px;color:#2e75b6;">(300)</div>
<div class="t" style="right:316.9px;top:531.37px;font-size:8.2px;line-height:10.66px;color:#2e75b6;">(300)</div>
<div class="t" style="right:263.2px;top:531.37px;font-size:8.2px;line-height:10.66px;color:#2e75b6;">(300)</div>
<div class="t" style="right:208.9px;top:531.37px;font-size:8.2px;line-height:10.66px;color:#2e75b6;">(300)</div>
<div class="t" style="right:163.0px;top:531.37px;font-size:8.2px;line-height:10.66px;color:#2e75b6;">(300)</div>
<div class="t" style="right:116.0px;top:531.37px;font-size:8.2px;line-height:10.66px;color:#2e75b6;">(300)</div>
<div class="t" style="right:72.0px;top:531.37px;font-size:8.2px;line-height:10.66px;color:#2e75b6;">(300)</div>
<div class="t" style="right:25.4px;top:531.37px;font-size:8.2px;line-height:10.66px;color:#2e75b6;">(3,600)</div>
<div class="t" style="left:55.5px;top:544.37px;font-size:8.2px;line-height:10.66px;color:#2e75b6;">Licencing</div>
<div class="t" style="right:749.4px;top:544.37px;font-size:8.2px;line-height:10.66px;color:#2e75b6;">(710)</div>
<div class="t" style="right:703.0px;top:544.37px;font-size:8.2px;line-height:10.66px;color:#2e75b6;">(710)</div>
<div class="t" style="right:656.3px;top:544.37px;font-size:8.2px;line-height:10.66px;color:#2e75b6;">(710)</div>
<div class="t" style="right:609.6px;top:544.37px;font-size:8.2px;line-height:10.66px;color:#2e75b6;">(710)</div>
<div class="t" style="right:556.4px;top:544.37px;font-size:8.2px;line-height:10.66px;color:#2e75b6;">(710)</div>
<div class="t" style="right:508.6px;top:544.37px;font-size:8.2px;line-height:10.66px;color:#2e75b6;">(710)</div>
<div class="t" style="right:461.3px;top:544.37px;font-size:8.2px;line-height:10.66px;color:#2e75b6;">(710)</div>
<div class="t" style="right:408.7px;top:544.37px;font-size:8.2px;line-height:10.66px;color:#2e75b6;">(710)</div>
<div class="t" style="right:363.1px;top:544.37px;font-size:8.2px;line-height:10.66px;color:#2e75b6;">(710)</div>
<div class="t" style="right:316.9px;top:544.37px;font-size:8.2px;line-height:10.66px;color:#2e75b6;">(710)</div>
<div class="t" style="right:263.2px;top:544.37px;font-size:8.2px;line-height:10.66px;color:#2e75b6;">(710)</div>
<div class="t" style="right:208.9px;top:544.37px;font-size:8.2px;line-height:10.66px;color:#2e75b6;">(710)</div>
<div class="t" style="right:163.0px;top:544.37px;font-size:8.2px;line-height:10.66px;color:#2e75b6;">(710)</div>
<div class="t" style="right:116.0px;top:544.37px;font-size:8.2px;line-height:10.66px;color:#2e75b6;">(710)</div>
<div class="t" style="right:72.0px;top:544.37px;font-size:8.2px;line-height:10.66px;color:#2e75b6;">(710)</div>
<div class="t" style="right:25.4px;top:544.37px;font-size:8.2px;line-height:10.66px;color:#2e75b6;">(8,520)</div>
<div class="t" style="left:55.5px;top:557.37px;font-size:8.2px;line-height:10.66px;color:#2e75b6;">Var_Placeholder5</div>
<div class="t" style="right:752.8px;top:557.37px;font-size:8.2px;line-height:10.66px;color:#8db0d6;">-</div>
<div class="t" style="right:706.4px;top:557.37px;font-size:8.2px;line-height:10.66px;color:#8db0d6;">-</div>
<div class="t" style="right:659.7px;top:557.37px;font-size:8.2px;line-height:10.66px;color:#8db0d6;">-</div>
<div class="t" style="right:613.0px;top:557.37px;font-size:8.2px;line-height:10.66px;color:#8db0d6;">-</div>
<div class="t" style="right:559.8px;top:557.37px;font-size:8.2px;line-height:10.66px;color:#8db0d6;">-</div>
<div class="t" style="right:512.0px;top:557.37px;font-size:8.2px;line-height:10.66px;color:#8db0d6;">-</div>
<div class="t" style="right:464.7px;top:557.37px;font-size:8.2px;line-height:10.66px;color:#8db0d6;">-</div>
<div class="t" style="right:412.1px;top:557.37px;font-size:8.2px;line-height:10.66px;color:#8db0d6;">-</div>
<div class="t" style="right:366.5px;top:557.37px;font-size:8.2px;line-height:10.66px;color:#8db0d6;">-</div>
<div class="t" style="right:320.3px;top:557.37px;font-size:8.2px;line-height:10.66px;color:#8db0d6;">-</div>
<div class="t" style="right:266.6px;top:557.37px;font-size:8.2px;line-height:10.66px;color:#8db0d6;">-</div>
<div class="t" style="right:212.3px;top:557.37px;font-size:8.2px;line-height:10.66px;color:#8db0d6;">-</div>
<div class="t" style="right:166.4px;top:557.37px;font-size:8.2px;line-height:10.66px;color:#8db0d6;">-</div>
<div class="t" style="right:119.4px;top:557.37px;font-size:8.2px;line-height:10.66px;color:#8db0d6;">-</div>
<div class="t" style="right:75.4px;top:557.37px;font-size:8.2px;line-height:10.66px;color:#8db0d6;">-</div>
<div class="t" style="right:28.8px;top:557.37px;font-size:8.2px;line-height:10.66px;color:#8db0d6;">-</div>
<div style="position:absolute;left:918.5px;top:502.5px;width:0;height:0;border-top:3.5px solid #1e7d3f;border-right:3.5px solid transparent"></div>
<div style="position:absolute;left:918.5px;top:515.5px;width:0;height:0;border-top:3.5px solid #1e7d3f;border-right:3.5px solid transparent"></div>
<div style="position:absolute;left:918.5px;top:528.5px;width:0;height:0;border-top:3.5px solid #1e7d3f;border-right:3.5px solid transparent"></div>
<div style="position:absolute;left:918.5px;top:541.5px;width:0;height:0;border-top:3.5px solid #1e7d3f;border-right:3.5px solid transparent"></div>
<div style="position:absolute;left:918.5px;top:554.5px;width:0;height:0;border-top:3.5px solid #1e7d3f;border-right:3.5px solid transparent"></div>
</div>
<div id="rowhdr">
<div class="rh" style="top:64px;height:12px;line-height:12.5px"><span>1</span></div>
<div class="rh" style="top:76px;height:16px;line-height:16.5px"><span>2</span></div>
<div class="rh" style="top:92px;height:12px;line-height:12.5px"><span>3</span></div>
<div class="rh" style="top:104px;height:12.2px;line-height:12.7px"><span>4</span></div>
<div class="rh" style="top:116.2px;height:12.7px;line-height:13.2px"><span>5</span></div>
<div class="rh" style="top:128.9px;height:12.3px;line-height:12.8px"><span>6</span></div>
<div class="rh" style="top:141.2px;height:12.8px;line-height:13.3px"><span>7</span></div>
<div class="rh" style="top:154px;height:12.5px;line-height:13.0px"><span>8</span></div>
<div class="rh" style="top:166.5px;height:12.5px;line-height:13.0px"><span>9</span></div>
<div class="rh" style="top:179px;height:12.5px;line-height:13.0px"><span>10</span></div>
<div class="rh" style="top:191.5px;height:9.5px;line-height:7.0px"><span>11</span></div>
<div class="rh" style="top:201px;height:12.5px;line-height:13.0px"><span>12</span></div>
<div class="rh" style="top:213.5px;height:12.5px;line-height:13.0px"><span>13</span></div>
<div class="rh" style="top:226.0px;height:12.5px;line-height:13.0px"><span>14</span></div>
<div class="rh" style="top:238.5px;height:12.5px;line-height:13.0px"><span>15</span></div>
<div class="rh" style="top:251.0px;height:12.5px;line-height:13.0px"><span>16</span></div>
<div class="rh" style="top:263.5px;height:12.5px;line-height:13.0px"><span>17</span></div>
<div class="rh" style="top:276.0px;height:12.5px;line-height:13.0px"><span>18</span></div>
<div class="rh" style="top:288.5px;height:12.5px;line-height:13.0px"><span>19</span></div>
<div class="rh" style="top:301.0px;height:12.5px;line-height:13.0px"><span>20</span></div>
<div class="rh" style="top:313.5px;height:12.5px;line-height:13.0px"><span>21</span></div>
<div class="rh" style="top:326.0px;height:12.5px;line-height:13.0px"><span>22</span></div>
<div class="rh" style="top:338.5px;height:12.5px;line-height:13.0px"><span>23</span></div>
<div class="rh" style="top:351.0px;height:12.5px;line-height:13.0px"><span>24</span></div>
<div class="rh" style="top:363.5px;height:12.5px;line-height:13.0px"><span>25</span></div>
<div class="rh" style="top:376.0px;height:12.5px;line-height:13.0px"><span>26</span></div>
<div class="rh" style="top:388.5px;height:12.5px;line-height:13.0px"><span>27</span></div>
<div class="rh" style="top:401.0px;height:12.5px;line-height:13.0px"><span>28</span></div>
<div class="rh" style="top:413.5px;height:12.5px;line-height:13.0px"><span>29</span></div>
<div class="rh" style="top:426.0px;height:12.5px;line-height:13.0px"><span>30</span></div>
<div class="rh" style="top:438.5px;height:12.5px;line-height:13.0px"><span>31</span></div>
<div class="rh" style="top:451.0px;height:12.4px;line-height:12.9px"><span>32</span></div>
<div class="rh" style="top:463.4px;height:12.6px;line-height:13.1px"><span>33</span></div>
<div class="rh" style="top:476px;height:13px;line-height:13.5px"><span>34</span></div>
<div class="rh" style="top:489px;height:13px;line-height:13.5px"><span>35</span></div>
<div class="rh" style="top:502px;height:13px;line-height:13.5px"><span>36</span></div>
<div class="rh" style="top:515px;height:13px;line-height:13.5px"><span>37</span></div>
<div class="rh" style="top:528px;height:13px;line-height:13.5px"><span>38</span></div>
<div class="rh" style="top:541px;height:13px;line-height:13.5px"><span>39</span></div>
<div class="rh" style="top:554px;height:13px;line-height:13.5px"><span>40</span></div>
</div>
<div id="colhdr">
<div style="position:absolute;left:8px;top:5.5px;width:0;height:0;border-bottom:7px solid #b5b5b5;border-left:7px solid transparent"></div>
<div class="ch" style="left:18px;width:10px">A</div>
<div class="ch" style="left:28px;width:12px">B</div>
<div class="ch" style="left:40px;width:42.5px">C</div>
<div class="ch" style="left:82.5px;width:41.5px">D</div>
<div class="ch" style="left:124px;width:69.4px">E</div>
<div class="ch sel" style="left:193.4px;width:47.0px">F</div>
<div class="ch" style="left:240.4px;width:46.4px">G</div>
<div class="ch" style="left:286.8px;width:46.7px">H</div>
<div class="ch" style="left:333.5px;width:46.7px">I</div>
<div class="ch" style="left:380.2px;width:53.2px">J</div>
<div class="ch" style="left:433.4px;width:47.8px">K</div>
<div class="ch" style="left:481.2px;width:47.3px">L</div>
<div class="ch" style="left:528.5px;width:52.6px">M</div>
<div class="ch" style="left:581.1px;width:45.6px">N</div>
<div class="ch" style="left:626.7px;width:46.2px">O</div>
<div class="ch" style="left:672.9px;width:53.7px">P</div>
<div class="ch" style="left:726.6px;width:54.3px">Q</div>
<div class="ch" style="left:780.9px;width:45.9px">R</div>
<div class="ch" style="left:826.8px;width:47.0px">S</div>
<div class="ch" style="left:873.8px;width:44.0px">T</div>
<div class="ch" style="left:917.8px;width:46.6px">U</div>
<div class="ch" style="left:964.4px;width:41.6px">V</div>
</div>
<div id="vscroll">
<div style="position:absolute;left:3.2px;top:12.5px;width:5.8px;height:101px;border-radius:3px;background:#7d7d7d"></div>
<div style="position:absolute;left:2.5px;top:4.5px;width:0;height:0;border-left:3.5px solid transparent;border-right:3.5px solid transparent;border-bottom:4.5px solid #666"></div>
<div style="position:absolute;left:2.5px;top:503px;width:0;height:0;border-left:3.5px solid transparent;border-right:3.5px solid transparent;border-top:4.5px solid #666"></div>
</div>
<div id="titlebar">
<svg style="left:10px;top:10px" width="11" height="11" viewBox="0 0 11 11"><rect x="3.5" y="0.5" width="7" height="10" fill="none" stroke="#fff" stroke-width="0.9"/><path d="M7 0.5v10M3.5 3.8h7M3.5 7.2h7" stroke="#fff" stroke-width="0.7"/><rect x="0" y="2.2" width="6" height="6.6" fill="#fff"/><path d="M1.6 3.8l2.8 3.4M4.4 3.8L1.6 7.2" stroke="#107c41" stroke-width="0.9"/></svg>
<svg style="left:31.5px;top:10px" width="11" height="11" viewBox="0 0 11 11" fill="none" stroke="#fff" stroke-width="0.9"><path d="M0.5 0.5h8l2 2v8h-10z"/><path d="M2.5 0.5v3h5v-3M2.5 10.5v-4h6v4"/></svg>
<svg style="left:50px;top:9.5px" width="11" height="12" viewBox="0 0 11 12" fill="none" stroke="#fff" stroke-width="1.1"><path d="M0.8 1v4h4"/><path d="M1 5c1.5-2.5 4-3.5 6.3-2.3 2.6 1.5 2.7 5.2-1.8 8.5"/></svg>
<svg style="left:64px;top:14.5px" width="4" height="2.5" viewBox="0 0 4 2.5" fill="#fff"><path d="M0 0h4l-2 2.5z"/></svg>
<svg style="left:75px;top:9.5px;opacity:.35" width="11" height="12" viewBox="0 0 11 12" fill="none" stroke="#fff" stroke-width="1.1"><path d="M10.2 1v4h-4"/><path d="M10 5c-1.5-2.5-4-3.5-6.3-2.3-2.6 1.5-2.7 5.2 1.8 8.5"/></svg>
<svg style="left:89px;top:14.5px;opacity:.35" width="4" height="2.5" viewBox="0 0 4 2.5" fill="#fff"><path d="M0 0h4l-2 2.5z"/></svg>
<svg style="left:101.5px;top:13px" width="6" height="6" viewBox="0 0 6 6" fill="none" stroke="#fff" stroke-width="0.8"><path d="M0.5 0.5h5M1 3l2 2 2-2"/></svg>
<div class="t" style="left:117px;top:8.8px;font-size:8.34px;line-height:13px;color:#fff;transform:scaleX(0.91);transform-origin:0 50%">Garden Machinery Manufacturer 20 Years Financial Model.xlsx&nbsp; -&nbsp; Excel</div>
<div style="position:absolute;left:385.7px;top:5.5px;width:239.5px;height:20.2px;border-radius:2px;background:#d5e8dd"></div>
<svg style="left:394px;top:10px" width="11" height="11" viewBox="0 0 11 11" fill="none" stroke="#2d7d52" stroke-width="1.1"><circle cx="6.5" cy="4.3" r="3.3"/><path d="M4.2 6.8L0.8 10.2"/></svg>
<div class="t" style="left:412.5px;top:9px;font-size:8.52px;line-height:13px;color:#2d6f4b">Search</div>
<div style="position:absolute;left:883.7px;top:7.6px;width:15.5px;height:15.5px;border-radius:8px;background:#3a2f8c"></div>
<div class="t" style="left:883px;top:10.5px;width:16px;text-align:center;font-size:5.5px;line-height:9px;color:#d6d0f3">RS</div>
<svg style="left:918px;top:10px" width="70" height="11" viewBox="0 0 70 11" fill="none" stroke="#fff" stroke-width="1"><path d="M1 5.5h7"/><rect x="32.5" y="3" width="5.5" height="5.5" rx="1"/><path d="M34.3 3V2.2a1 1 0 0 1 1-1h3.5a1 1 0 0 1 1 1v3.5a1 1 0 0 1-1 1h-0.8"/><path d="M63.5 2l7 7M70.5 2l-7 7"/></svg>
</div>
<div id="menubar">
<div class="t" style="left:13.7px;font-size:8.76px">File</div>
<div class="t" style="left:44.5px;font-size:8.76px">Home</div>
<div class="t" style="left:80.5px;font-size:8.76px">Insert</div>
<div class="t" style="left:116px;font-size:8.76px">Draw</div>
<div class="t" style="left:149.5px;font-size:8.76px">Page Layout</div>
<div class="t" style="left:211.5px;font-size:8.76px">Formulas</div>
<div class="t" style="left:260px;font-size:8.76px">Data</div>
<div class="t" style="left:292.5px;font-size:8.76px">Review</div>
<div class="t" style="left:333px;font-size:8.76px">View</div>
<div class="t" style="left:364.5px;font-size:8.76px">Developer</div>
<div class="t" style="left:418px;font-size:8.76px">Help</div>
<div class="t" style="left:449px;font-size:8.76px">Acrobat</div>
<div class="t" style="left:493px;font-size:8.76px">Power Pivot</div>
<div style="position:absolute;left:946px;top:2.6px;width:46.3px;height:15.1px;border-radius:2.5px;background:#107c41"></div>
<svg style="left:948.3px;top:5.8px" width="8.5" height="8.5" viewBox="0 0 9 9" fill="none" stroke="#fff" stroke-width="0.9"><path d="M3 3.2H1v5h6.2v-3"/><path d="M3.2 5.8c0-2 1.5-3.3 3.6-3.3M5.4 0.8l1.6 1.7-1.6 1.7"/></svg>
<div class="t" style="left:959.6px;top:4.2px;font-size:7.8px;color:#fff;line-height:12px;font-weight:bold">Share</div>
<svg style="left:985.8px;top:9.5px" width="4.6" height="2.8" viewBox="0 0 5 3" fill="none" stroke="#fff" stroke-width="1.4"><path d="M0.3 0.3l2.2 2.2 2.2-2.2"/></svg>
</div>
<div id="tabbar">
<div class="tab y" style="left:74px;width:93px"></div>
<div class="t" style="left:80px;top:4.4px;font-size:8.83px;line-height:12px;color:#222">Product Sales 35-39</div>
<div class="tab y" style="left:173px;width:91px"></div>
<div class="t" style="left:178.5px;top:4.4px;font-size:8.83px;line-height:12px;color:#222">Product Sales 40-44</div>
<div class="tab y" style="left:271.5px;width:71.5px"></div>
<div class="t" style="left:277.5px;top:4.4px;font-size:8.84px;line-height:12px;color:#222">2025 Accounts</div>
<div class="tab " style="left:348px;width:100px"></div>
<div class="t" style="left:354.5px;top:4.4px;font-size:8.75px;line-height:12px;color:#222">2025 MRR Dashboard</div>
<div class="tab" style="left:452px;width:45px;top:0;height:18px;background:#fff;border-radius:0 0 2px 2px"><div style="position:absolute;left:7.5px;right:7.5px;bottom:3px;height:1.3px;background:#1f7a45"></div></div>
<div class="t" style="left:460px;top:2.9px;font-size:8.7px;line-height:12px;color:#111;font-weight:bold">IS 2025</div>
<div class="tab y" style="left:500px;width:43.5px"></div>
<div class="t" style="left:505.9px;top:4.4px;font-size:8.42px;line-height:12px;color:#222">CF 2025</div>
<div class="tab " style="left:548px;width:47px"></div>
<div class="t" style="left:556.2px;top:4.4px;font-size:8.35px;line-height:12px;color:#222">BS 2025</div>
<div class="tab " style="left:598px;width:123px"></div>
<div class="t" style="left:606px;top:4.4px;font-size:8.89px;line-height:12px;color:#222">Statements Summary 2025</div>
<div class="tab y" style="left:724.5px;width:62.0px"></div>
<div class="t" style="left:732.4px;top:4.4px;font-size:8.35px;line-height:12px;color:#222">CAPEX 2025</div>
<div class="tab y" style="left:792.5px;width:53.5px"></div>
<div class="t" style="left:798.8px;top:4.4px;font-size:8.35px;line-height:12px;color:#222">OPEX2025</div>
<div class="tab y" style="left:852px;width:27px"></div>
<div class="t" style="left:858.3px;top:4.4px;font-size:8.41px;line-height:12px;color:#222">2026</div>
<svg style="left:15px;top:6.5px" width="8" height="8" viewBox="0 0 8 8" fill="none" stroke="#9a9a9a" stroke-width="1"><path d="M5.5 0.5l-3.5 3.5 3.5 3.5"/></svg>
<svg style="left:36px;top:6.5px" width="8" height="8" viewBox="0 0 8 8" fill="none" stroke="#9a9a9a" stroke-width="1"><path d="M2.5 0.5l3.5 3.5-3.5 3.5"/></svg>
<svg style="left:55px;top:9px" width="10" height="3" viewBox="0 0 10 3" fill="#333"><circle cx="1.5" cy="1.5" r="1"/><circle cx="5" cy="1.5" r="1"/><circle cx="8.5" cy="1.5" r="1"/></svg>
<svg style="left:885.5px;top:10px" width="10" height="3" viewBox="0 0 10 3" fill="#333"><circle cx="1.5" cy="1.5" r="0.9"/><circle cx="5" cy="1.5" r="0.9"/><circle cx="8.5" cy="1.5" r="0.9"/></svg>
<svg style="left:907px;top:6.5px" width="8" height="8" viewBox="0 0 8 8" fill="none" stroke="#333" stroke-width="1"><path d="M4 0v8M0 4h8"/></svg>
<svg style="left:931px;top:6px" width="3" height="10" viewBox="0 0 3 10" fill="#444"><circle cx="1.5" cy="1.5" r="0.8"/><circle cx="1.5" cy="5" r="0.8"/><circle cx="1.5" cy="8.5" r="0.8"/></svg>
<div style="position:absolute;left:945.5px;top:7.5px;width:0;height:0;border-top:3px solid transparent;border-bottom:3px solid transparent;border-right:4px solid #555"></div>
<div style="position:absolute;left:980.5px;top:7.5px;width:0;height:0;border-top:3px solid transparent;border-bottom:3px solid transparent;border-left:4px solid #555"></div>
<div style="position:absolute;left:954px;top:8px;width:13px;height:5px;border-radius:2.5px;background:#666"></div>
</div>
<div id="statusbar">
<div class="t" style="left:7.5px;top:2.6px;font-size:6.9px;line-height:10px;color:#333">Ready</div>
<svg style="left:40.5px;top:2.5px" width="9" height="9" viewBox="0 0 9 9" fill="none" stroke="#444" stroke-width="0.9"><rect x="0.5" y="0.5" width="8" height="8" fill="#6a6a6a"/><circle cx="5.5" cy="5.8" r="1.3" fill="#f3f3f3" stroke="none"/><path d="M1.5 2.2h6" stroke="#f3f3f3" stroke-width="0.7"/></svg>
<svg style="left:61px;top:2px" width="9" height="10" viewBox="0 0 9 10" fill="none" stroke="#333" stroke-width="0.9"><circle cx="4.5" cy="1.5" r="1.1"/><path d="M0.8 3.8h7.4M4.5 3.8v2.5M2.5 9.5l2-3.2 2 3.2"/></svg>
<div class="t" style="left:72.4px;top:2.6px;font-size:6.7px;line-height:10px;color:#222;font-weight:bold">Accessibility: Investigate</div>
<div style="position:absolute;left:809px;top:0;width:19px;height:11px;background:#dcdcdc"></div>
<svg style="left:813.5px;top:2.5px" width="9" height="9" viewBox="0 0 9 9" fill="none" stroke="#333" stroke-width="0.8"><rect x="0.5" y="0.5" width="8" height="8"/><path d="M0.5 3.2h8M0.5 5.8h8M3.2 0.5v8M5.8 0.5v8"/></svg>
<svg style="left:840.5px;top:2.5px" width="9" height="9" viewBox="0 0 9 9" fill="none" stroke="#333" stroke-width="0.8"><rect x="0.5" y="0.5" width="8" height="8"/><path d="M2.5 0.5v8M6.5 0.5v8M2.5 3h4M2.5 5.5h4" stroke-width="0.7"/></svg>
<svg style="left:866px;top:2.5px" width="9" height="9" viewBox="0 0 9 9" fill="none" stroke="#333" stroke-width="0.8"><rect x="0.5" y="0.5" width="8" height="8"/><path d="M0.5 5.5h3v-3h2.5v3h2.5"/></svg>
<div style="position:absolute;left:888px;top:6.5px;width:5px;height:1px;background:#888"></div>
<div style="position:absolute;left:897px;top:6.5px;width:66px;height:1px;background:#aaa"></div>
<div style="position:absolute;left:928px;top:2.5px;width:2.5px;height:9px;background:#444"></div>
<div style="position:absolute;left:965.5px;top:6.5px;width:5px;height:1px;background:#999"></div><div style="position:absolute;left:967.5px;top:4.5px;width:1px;height:5px;background:#999"></div>
<div class="t" style="left:979.5px;top:2.6px;font-size:7.2px;line-height:10px;color:#333">100%</div>
</div>
</body></html>
